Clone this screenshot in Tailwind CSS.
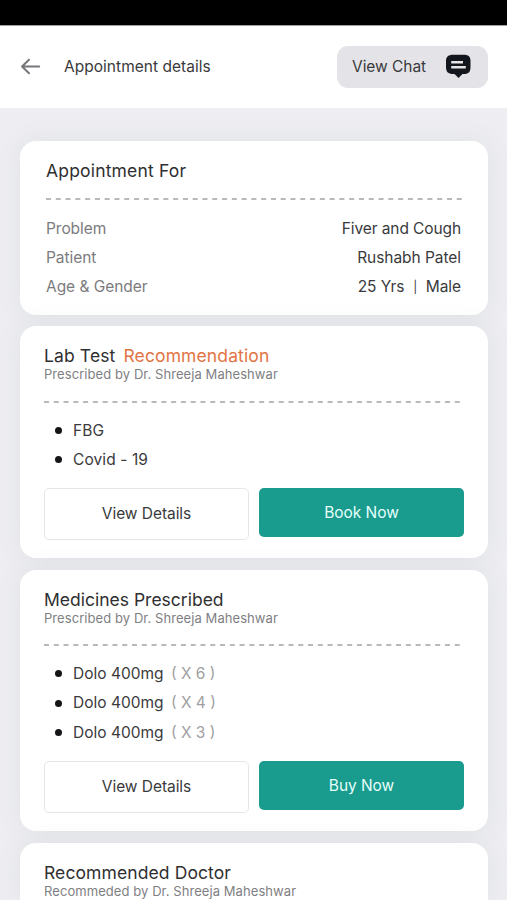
<!DOCTYPE html>
<html lang="en">
<head>
<meta charset="utf-8">
<title>Appointment details</title>
<script src="https://cdn.jsdelivr.net/npm/@tailwindcss/browser@4"></script>
</head>
<body class="flex h-[900px] flex-col overflow-hidden bg-[#eeeef2] font-['Inter',sans-serif] text-[15.5px] text-[#3a3a3c]">
<div class="h-[26px] shrink-0 border-b border-[#a0a0a0] bg-black"></div>
<header class="flex h-[82px] shrink-0 items-center bg-white pl-[20px] pr-[19px]">
  <svg class="h-5 w-[22px]" viewBox="0 0 22 20" fill="none" stroke="#77777b" stroke-width="2" stroke-linecap="round" stroke-linejoin="round"><path d="M19.2 9.500H2M9 2.800L2 9.500l7 6.700"/></svg>
  <h1 class="ml-[22px] flex-1 whitespace-nowrap text-[15.5px] tracking-[0.03px]">Appointment details</h1>
  <button class="flex h-[42px] w-[151px] items-center justify-between rounded-[11px] bg-[#e4e4e8] pl-[15px] pr-[16px]">
    <span class="whitespace-nowrap tracking-[-0.05px]">View Chat</span>
    <svg class="h-[26px] w-[27px]" viewBox="0 0 27 26"><path fill="#14161d" d="M8 0.800h11c4.500 0 6.500 2 6.500 6v6.200c0 5-2 7-6.300 7h-1.700l-4 4-4-4H7.800C3.500 20 1 18 1 13V6.800c0-4 2.500-6 7-6z"/><path stroke="#e4e4e8" stroke-width="2.400" d="M6.200 8.200h11.800M6.200 13.200h14.600"/></svg>
  </button>
</header>
<main class="flex min-h-0 flex-1 flex-col gap-[11.500px] overflow-hidden px-5 pt-[33px] pr-[19px]">
  <section class="h-[173.500px] shrink-0 rounded-2xl bg-white pt-[18px] pr-[27px] pl-[26px] shadow-[0_0_26px_rgba(90,110,110,0.09)]">
    <h2 class="text-[17.500px] leading-6 tracking-[0.18px] text-[#2f2f31]">Appointment For</h2>
    <svg class="mt-[15px] block h-[2px] w-[417px]" viewBox="0 0 417 2"><path d="M0 1h416" stroke="#b9b9bb" stroke-width="2" stroke-dasharray="5 4.780"/></svg>
    <dl class="mt-[13.500px] leading-[29.400px] tracking-[-0.05px]">
      <div class="flex justify-between"><dt class="text-[#7b7b7e]">Problem</dt><dd class="tracking-[-0.1px]">Fiver and Cough</dd></div>
      <div class="flex justify-between"><dt class="text-[#7b7b7e]">Patient</dt><dd>Rushabh Patel</dd></div>
      <div class="flex justify-between"><dt class="text-[#7b7b7e]">Age &amp; Gender</dt><dd class="whitespace-pre">25 Yrs  <span class="relative -top-px text-[12px]">|</span>  Male</dd></div>
    </dl>
  </section>

  <section class="h-[232px] shrink-0 rounded-2xl bg-white pt-[18px] px-6 shadow-[0_0_26px_rgba(90,110,110,0.09)]">
    <h2 class="text-[17.500px] leading-6 tracking-[0.12px] text-[#2f2f31]">Lab Test <span class="ml-[3px] text-[#e27444]">Recommendation</span></h2>
    <p class="-mt-px text-[13px] leading-[15px] tracking-[0.07px] text-[#808083]">Prescribed by Dr. Shreeja Maheshwar</p>
    <svg class="mt-[18.500px] block h-[2px] w-[417px]" viewBox="0 0 417 2"><path d="M0 1h416" stroke="#b9b9bb" stroke-width="2" stroke-dasharray="5 4.780"/></svg>
    <ul class="mt-[13px] pl-[11px] leading-[29.400px] tracking-[0.1px]">
      <li class="flex items-center gap-[11px]"><i class="size-[7px] rounded-full bg-[#151517]"></i>FBG</li>
      <li class="flex items-center gap-[11px]"><i class="size-[7px] rounded-full bg-[#151517]"></i>Covid - 19</li>
    </ul>
    <div class="mt-[14px] grid grid-cols-2 items-start gap-[10px]">
      <button class="h-[51.500px] rounded-[5px] border-[1.500px] border-[#e6e6e8] tracking-[-0.05px]">View Details</button>
      <button class="h-[49px] rounded-[5px] bg-[#199b8d] tracking-[-0.05px] text-[#e6fffb]">Book Now</button>
    </div>
  </section>

  <section class="h-[261.500px] shrink-0 rounded-2xl bg-white pt-[18px] px-6 shadow-[0_0_26px_rgba(90,110,110,0.09)]">
    <h2 class="text-[17.500px] leading-6 tracking-[0px] text-[#2f2f31]">Medicines Prescribed</h2>
    <p class="-mt-px text-[13px] leading-[15px] tracking-[0.07px] text-[#808083]">Prescribed by Dr. Shreeja Maheshwar</p>
    <svg class="mt-[18px] block h-[2px] w-[417px]" viewBox="0 0 417 2"><path d="M0 1h416" stroke="#b9b9bb" stroke-width="2" stroke-dasharray="5 4.780"/></svg>
    <ul class="mt-[13.500px] pl-[11px] leading-[29.400px] tracking-[0px]">
      <li class="flex items-center gap-[11px]"><i class="size-[7px] rounded-full bg-[#151517]"></i><span>Dolo 400mg <span class="ml-[3px] text-[#a0a0a2]">( X 6 )</span></span></li>
      <li class="flex items-center gap-[11px]"><i class="size-[7px] rounded-full bg-[#151517]"></i><span>Dolo 400mg <span class="ml-[3px] text-[#a0a0a2]">( X 4 )</span></span></li>
      <li class="flex items-center gap-[11px]"><i class="size-[7px] rounded-full bg-[#151517]"></i><span>Dolo 400mg <span class="ml-[3px] text-[#a0a0a2]">( X 3 )</span></span></li>
    </ul>
    <div class="mt-[14px] grid grid-cols-2 items-start gap-[10px]">
      <button class="h-[51.500px] rounded-[5px] border-[1.500px] border-[#e6e6e8] tracking-[-0.05px]">View Details</button>
      <button class="h-[49px] rounded-[5px] bg-[#199b8d] tracking-[-0.05px] text-[#e6fffb]">Buy Now</button>
    </div>
  </section>

  <section class="h-[58px] shrink-0 rounded-t-2xl bg-white pt-[18px] px-6 shadow-[0_0_26px_rgba(90,110,110,0.09)]">
    <h2 class="text-[17.500px] leading-6 tracking-[0.1px] text-[#2f2f31]">Recommended Doctor</h2>
    <p class="-mt-px text-[13px] leading-[15px] tracking-[0.07px] text-[#808083]">Recommeded by Dr. Shreeja Maheshwar</p>
  </section>
</main>
</body>
</html>
